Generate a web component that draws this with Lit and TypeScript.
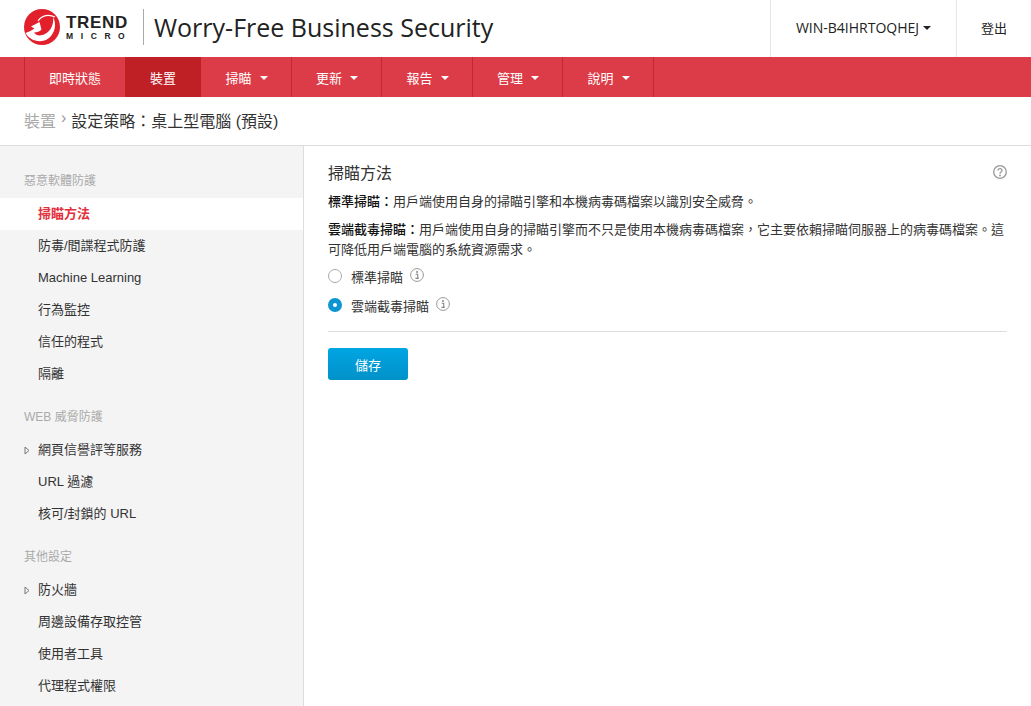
import { LitElement, css, html } from 'lit';
import { customElement, property } from 'lit/decorators.js';

const caret = html`<span class="caret"></span>`;

const navItems = [
  { label: '即時狀態', width: 101 },
  { label: '裝置', width: 76, active: true },
  { label: '掃瞄', width: 90, menu: true },
  { label: '更新', width: 90, menu: true },
  { label: '報告', width: 91, menu: true },
  { label: '管理', width: 90, menu: true },
  { label: '說明', width: 92, menu: true },
];

const sideGroups = [
  {
    title: '惡意軟體防護',
    items: [
      { label: '掃瞄方法', active: true },
      { label: '防毒/間諜程式防護' },
      { label: 'Machine Learning' },
      { label: '行為監控' },
      { label: '信任的程式' },
      { label: '隔離' },
    ],
  },
  {
    title: 'WEB 威脅防護',
    items: [{ label: '網頁信譽評等服務', expand: true }, { label: 'URL 過濾' }, { label: '核可/封鎖的 URL' }],
  },
  {
    title: '其他設定',
    items: [
      { label: '防火牆', expand: true },
      { label: '周邊設備存取控管' },
      { label: '使用者工具' },
      { label: '代理程式權限' },
    ],
  },
];

const infoIcon = html`
  <svg class="info" viewBox="0 0 14 14" width="14" height="14">
    <circle cx="7" cy="7" r="6.4" fill="none" stroke="#999" stroke-width="1" />
    <circle cx="7" cy="4" r="1" fill="#888" />
    <path d="M5.6 6.2H7.7V10H8.8M5.4 10.4H8.8" fill="none" stroke="#888" stroke-width="1.1" />
  </svg>
`;

const expandIcon = html`
  <svg class="expand" viewBox="0 0 6 9" width="6" height="9">
    <path d="M1 1L5 4.500L1 8Z" fill="none" stroke="#777" stroke-width="1" />
  </svg>
`;

@customElement('app-root')
export class AppRoot extends LitElement {
  @property({ type: String })
  scanMode = 'cloud';

  render() {
    return html`
      <header class="top">
        <div class="brand">
          <svg class="globe" viewBox="0 0 36 36" width="36" height="36">
            <circle cx="18" cy="18" r="18" fill="#e2202c" />
            <path
              d="M1.500 24C6 32 17 35 25 29C31 24 33 15 29 8C30 15 27 22 21 25C16 27.500 12 26.500 10 23.500C13 23.500 16 22.500 17.500 20.500L15.500 13L7 17.500L10.500 19.500C8 21.500 5 22.500 1.500 24Z"
              fill="#fff"
            />
            <path d="M14 12C18 6 25 5 31 8" fill="none" stroke="#fff" stroke-width="1.200" />
          </svg>
          <div class="wordmark">
            <span class="trend">TREND</span>
            <span class="micro">MICRO</span>
          </div>
          <div class="product">Worry-Free Business Security</div>
        </div>
        <div class="top-cell host">WIN-B4IHRTOQHEJ <span class="caret dark"></span></div>
        <div class="top-cell logout">登出</div>
      </header>
      <nav class="nav">
        ${navItems.map(
          item => html`
            <a class="nav-item ${item.active ? 'active' : ''} ${item.menu ? 'menu' : ''}" style="width:${item.width}px"
              >${item.label}${item.menu ? caret : ''}</a
            >
          `,
        )}
      </nav>
      <div class="crumbs">
        <span class="crumb-root">裝置</span><span class="crumb-sep">›</span>設定策略：桌上型電腦 (預設)
      </div>
      <div class="body">
        <aside class="side">
          ${sideGroups.map(
            group => html`
              <div class="side-title">${group.title}</div>
              ${group.items.map(
                (item: { label: string; active?: boolean; expand?: boolean }) => html`
                  <div class="side-item ${item.active ? 'active' : ''}">
                    ${item.expand ? expandIcon : ''}${item.label}
                  </div>
                `,
              )}
            `,
          )}
        </aside>
        <main class="main">
          <div class="title-row">
            <h1>掃瞄方法</h1>
            <svg class="help" viewBox="0 0 14 14" width="14" height="14">
              <circle cx="7" cy="7" r="6.300" fill="none" stroke="#999" stroke-width="1.300" />
              <path d="M5 5.500C5 3 9 3 9 5.500C9 7 7 7 7 8.700" fill="none" stroke="#999" stroke-width="1.300" />
              <circle cx="7" cy="10.500" r="0.900" fill="#999" />
            </svg>
          </div>
          <p><span class="term">標準掃瞄：</span>用戶端使用自身的掃瞄引擎和本機病毒碼檔案以識別安全威脅。</p>
          <p>
            <span class="term">雲端截毒掃瞄：</span
            >用戶端使用自身的掃瞄引擎而不只是使用本機病毒碼檔案，它主要依賴掃瞄伺服器上的病毒碼檔案。這可降低用戶端電腦的系統資源需求。
          </p>
          <div class="radios">
            <label class="radio"><span class="dot"></span>標準掃瞄${infoIcon}</label>
            <label class="radio"><span class="dot on"></span>雲端截毒掃瞄${infoIcon}</label>
          </div>
          <hr />
          <button>儲存</button>
        </main>
      </div>
    `;
  }

  static styles = css`
    * {
      box-sizing: border-box;
    }
    :host {
      display: block;
      height: 706px;
      overflow: hidden;
      background: #fff;
      color: #333;
      font-family: 'Liberation Sans', 'Noto Sans CJK TC', sans-serif;
      font-size: 13px;
    }

    .top {
      display: flex;
      height: 57px;
    }
    .brand {
      display: flex;
      flex: 1;
      align-items: center;
      padding-left: 24px;
    }
    .globe {
      flex: none;
      margin-top: -4px;
    }
    .wordmark {
      display: flex;
      flex-direction: column;
      margin: -3px 0 0 6px;
      width: 77px;
      color: #222;
      font-weight: bold;
    }
    .trend {
      letter-spacing: 0.7px;
      font-size: 17px;
      line-height: 17px;
    }
    .micro {
      margin-top: 1px;
      letter-spacing: 7.600px;
      font-size: 8.500px;
      line-height: 9px;
    }
    .product {
      margin: -3px 0 0 0;
      border-left: 1px solid #aaa;
      padding-left: 10px;
      color: #222;
      font-family: 'Open Sans', sans-serif;
      font-size: 25px;
      line-height: 36px;
    }
    .top-cell {
      display: flex;
      align-items: center;
      justify-content: center;
      border-left: 1px solid #e6e6e6;
      padding-bottom: 2px;
      color: #222;
    }
    .host {
      gap: 4px;
      width: 186px;
      font-family: 'Open Sans', sans-serif;
      font-size: 14px;
    }
    .logout {
      width: 75px;
    }

    .nav {
      display: flex;
      background: #dc3c47;
      padding-left: 24px;
      height: 40px;
    }
    .nav-item {
      display: flex;
      flex: none;
      align-items: center;
      justify-content: center;
      border-left: 1px solid #c4272f;
      color: #fff;
    }
    .nav-item.menu {
      gap: 8px;
      padding-left: 1px;
    }
    .nav-item:last-child {
      border-right: 1px solid #c4272f;
    }
    .nav-item.active {
      border-left: none;
      background: #bf2026;
    }
    .nav-item.active + .nav-item {
      border-left: none;
    }
    .nav-item .caret {
      margin-top: 2px;
    }
    .caret {
      border-top: 4px solid #fff;
      border-right: 4px solid transparent;
      border-left: 4px solid transparent;
    }
    .caret.dark {
      border-top-color: #222;
    }

    .crumbs {
      display: flex;
      align-items: center;
      border-bottom: 1px solid #ddd;
      padding-bottom: 2px;
      padding-left: 24px;
      height: 49px;
      color: #333;
      font-size: 16px;
    }
    .crumb-root {
      color: #aaa;
    }
    .crumb-sep {
      margin: -4px 5px 0 5px;
      color: #999;
    }

    .body {
      display: flex;
      height: 560px;
    }
    .side {
      flex: none;
      border-right: 1px solid #ddd;
      background: #f4f4f4;
      width: 304px;
    }
    .side-title {
      margin-top: 17px;
      margin-bottom: 7px;
      padding-left: 24px;
      color: #aaa;
      font-size: 12px;
      line-height: 20px;
    }
    .side-title:first-child {
      margin-top: 25px;
      margin-bottom: 7px;
    }
    .side-item {
      position: relative;
      padding-left: 38px;
      color: #333;
      line-height: 32px;
    }
    .side-item.active {
      background: #fff;
      color: #e2303c;
      font-weight: bold;
    }
    .expand {
      position: absolute;
      top: 12px;
      left: 24px;
    }

    .main {
      flex: 1;
      padding: 18px 24px 0 24px;
    }
    .title-row {
      display: flex;
      align-items: center;
      justify-content: space-between;
      margin-bottom: 8px;
    }
    .help {
      margin: -5px 0 0 0;
    }
    h1 {
      margin: 0;
      color: #333;
      font-weight: normal;
      font-size: 16px;
      line-height: 20px;
    }
    p {
      margin: 0 0 8px 0;
      line-height: 20px;
    }
    .term {
      color: #111;
      font-weight: 500;
    }
    .radios {
      display: flex;
      flex-direction: column;
      gap: 5px;
      margin-top: -4px;
    }
    .radio {
      display: flex;
      align-items: center;
      height: 24px;
    }
    .dot {
      flex: none;
      margin-right: 9px;
      border: 1px solid #aaa;
      border-radius: 50%;
      width: 14px;
      height: 14px;
    }
    .dot.on {
      border: 5px solid #0d94d2;
      background: #fff;
    }
    .info {
      margin: -3px 0 0 7px;
    }
    hr {
      margin: 14px 0 16px 0;
      border: none;
      border-top: 1px solid #ddd;
    }
    button {
      border: none;
      border-radius: 3px;
      background: linear-gradient(#00a5e3, #0291c9);
      width: 80px;
      height: 32px;
      color: #fff;
      font: inherit;
    }
  `;
}
